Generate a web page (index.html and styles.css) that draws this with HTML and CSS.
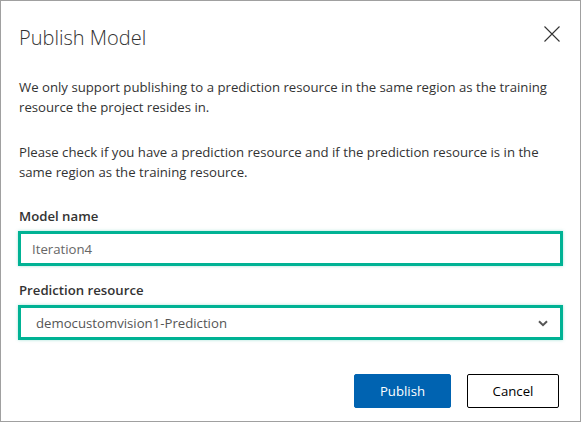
FILE: index.html
```html
<!DOCTYPE html>
<html lang="en">
<head>
<meta charset="utf-8">
<title>Publish Model</title>
<link rel="stylesheet" href="styles.css">
</head>
<body>
<div class="dialog">
  <div class="header">
    <h1 class="title">Publish Model</h1>
    <button class="close" aria-label="Close">
      <svg width="16" height="16" viewBox="0 0 16 16"><path d="M0.5 0.5 L15.5 15.5 M15.5 0.5 L0.5 15.5" stroke="#333" stroke-width="1.1" fill="none"/></svg>
    </button>
  </div>
  <p class="text">We only support publishing to a prediction resource in the same region as the training resource the project resides in.</p>
  <p class="text">Please check if you have a prediction resource and if the prediction resource is in the same region as the training resource.</p>
  <div class="field">
    <label class="label">Model name</label>
    <div class="box"><span class="value">Iteration4</span></div>
  </div>
  <div class="field">
    <label class="label">Prediction resource</label>
    <div class="box select"><span class="value sel">democustomvision1-Prediction</span>
      <svg class="chev" width="10" height="7" viewBox="0 0 10 7"><path d="M1 1.2 L5 5.2 L9 1.2" stroke="#555" stroke-width="2" fill="none"/></svg>
    </div>
  </div>
  <div class="actions">
    <button class="btn primary">Publish</button>
    <button class="btn secondary">Cancel</button>
  </div>
</div>
</body>
</html>
```
FILE: styles.css
```css
* { box-sizing: border-box; }
html, body { margin: 0; padding: 0; background: #ffffff; }
body { font-family: "Open Sans", "Noto Sans", sans-serif; color: #333333; }
.dialog {
  width: 581px;
  height: 422px;
  border: 1px solid #a0a0a0;
  background: #ffffff;
  padding: 0 20px 0 18px;
  display: flex;
  flex-direction: column;
}
.header {
  display: flex;
  justify-content: space-between;
  align-items: flex-start;
  padding-top: 23px;
}
.title {
  margin: 0;
  font-size: 20px;
  font-weight: 300;
  line-height: 28px;
  color: #333333;
}
.close {
  border: 0;
  background: none;
  padding: 0;
  margin: 2px 0 0 0;
  width: 16px;
  height: 16px;
  display: flex;
}
.text {
  margin: 25px 0 0 0;
  font-size: 13.2px;
  line-height: 20px;
  color: #333333;
}
.text + .text { margin-top: 25px; }
.field { margin-top: 24px; }
.field + .field { margin-top: 14px; }
.label {
  display: block;
  font-size: 13.2px;
  font-weight: 600;
  line-height: 20px;
  color: #333333;
  margin-bottom: 5px;
}
.box {
  width: 545px;
  height: 35px;
  margin-left: -1px;
  border: 3px solid #00b294;
  box-shadow: 0 0 3px rgba(0, 178, 148, 0.35);
  display: flex;
  align-items: center;
  padding-left: 11px;
  padding-right: 12px;
}
.value {
  font-size: 13.2px;
  color: #666666;
}
.select { justify-content: space-between; }
.sel { color: #555555; margin-left: 4px; }
.chev { margin-top: 2px; }
.actions {
  display: flex;
  justify-content: flex-end;
  gap: 16px;
  margin-top: 34px;
  padding-right: 1px;
}
.btn {
  height: 34px;
  font-family: "Open Sans", "Noto Sans", sans-serif;
  font-size: 13.2px;
  border-radius: 2px;
  cursor: pointer;
}
.primary {
  width: 97px;
  background: #0063b1;
  color: #ffffff;
  border: 1px solid #0063b1;
}
.secondary {
  width: 92px;
  background: #ffffff;
  color: #000000;
  border: 1px solid #000000;
}
```
